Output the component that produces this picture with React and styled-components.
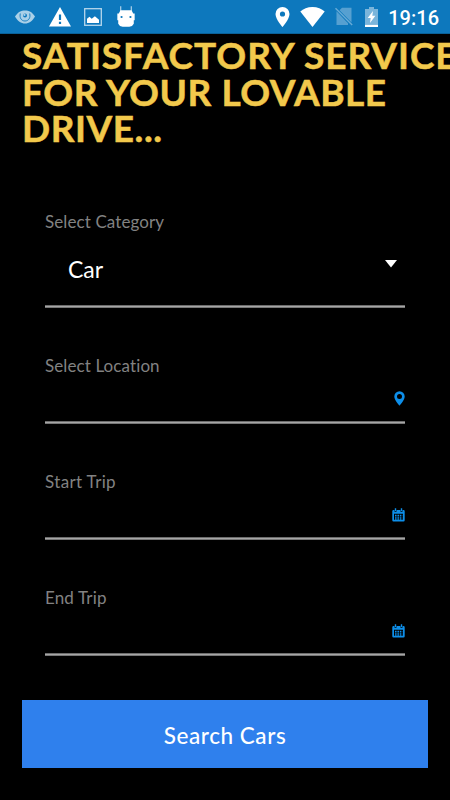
import React from "react";
import styled, { createGlobalStyle } from "styled-components";

const GlobalStyle = createGlobalStyle`
    * {
        box-sizing: border-box;
    }
    body {
        margin: 0;
        background: #000;
        overflow: hidden;
    }
`;

const fields = [
    { label: "Select Location", icon: "pin", spacing: "0.1px" },
    { label: "Start Trip", icon: "calendar", spacing: "0.35px" },
    { label: "End Trip", icon: "calendar", spacing: "0.15px" },
];

const PinIcon = (props) => (
    <svg viewBox="0 0 14 20" {...props}>
        <path
            fill="currentColor"
            fillRule="evenodd"
            d="M7 0a7 7 0 0 0-7 7c0 5.200 7 13 7 13s7-7.800 7-13a7 7 0 0 0-7-7zm0 4.400a2.600 2.600 0 1 1 0 5.200 2.600 2.600 0 0 1 0-5.200z"
        />
    </svg>
);

const FieldPinIcon = () => (
    <svg width="11" height="15" viewBox="0 0 11 15">
        <path
            fill="#0d8ee9"
            fillRule="evenodd"
            d="M5.500.2A5.200 5.200 0 0 0 .3 5.400C.3 9 5.500 14.600 5.500 14.600S10.700 9 10.700 5.400A5.200 5.200 0 0 0 5.500.2zm0 2.900a2.500 2.500 0 1 1 0 5 2.500 2.500 0 0 1 0-5z"
        />
    </svg>
);

const EyeIcon = () => (
    <svg width="20" height="14" viewBox="0 0 20 14" opacity=".65">
        <path fill="#fff" d="M0 6.500C3 2 6 .5 10 .5s7 1.500 10 6C17.500 11 14 13.500 10 13.500S2.500 11 0 6.500z" />
        <path fill="none" stroke="#0d78bd" strokeWidth=".9" d="M5.300 3.500c-1 4.200 1 7.500 4.700 7.500s5.700-3.300 4.700-7.500" />
        <circle cx="10" cy="5.600" r="2" fill="#0d78bd" />
        <circle cx="9.500" cy="4.900" r="1.100" fill="#fff" />
    </svg>
);

const WarningIcon = () => (
    <svg width="22" height="20" viewBox="0 0 22 20">
        <path fill="#fff" fillRule="evenodd" d="M11 0L0 19.500h22zM9.900 7.500h2.200v5.600H9.900zm0 7.300h2.200v2.300H9.900z" />
    </svg>
);

const ImageIcon = () => (
    <svg width="18" height="18" viewBox="0 0 18 18">
        <rect x=".7" y=".7" width="16.600" height="16.600" fill="none" stroke="#fff" strokeOpacity=".7" strokeWidth="1.300" />
        <path fill="#fff" d="M3 15v-4.300l2.500-1.900 2.200 2 3.200-2.500L15 11.700V15z" />
    </svg>
);

const AndroidIcon = () => (
    <svg width="20" height="21" viewBox="0 0 18 21" preserveAspectRatio="none">
        <path fill="none" stroke="#fff" strokeOpacity=".6" strokeWidth="1.200" d="M4.200 .3v5M13.800 .3v5" />
        <path
            fill="#fff"
            fillRule="evenodd"
            d="M4 4.200h10l1.500 3.300h1.300v6.700h-.8v3.500l-1.600 2.300-2.400.8H6l-2.400-.8L2 17.700v-3.500h-.8V7.500h1.300zM5 10a1 1 0 1 0 0 2 1 1 0 0 0 0-2zm8 0a1 1 0 1 0 0 2 1 1 0 0 0 0-2z"
        />
    </svg>
);

const WifiIcon = () => (
    <svg width="25" height="20" viewBox="0 0 25 20">
        <path fill="#fff" d="M12.500 20L.3 4.600C3.300 1.800 7.500 0 12.500 0s9.200 1.800 12.200 4.600z" />
    </svg>
);

const NoSimIcon = () => (
    <svg width="20" height="19" viewBox="0 0 20 19">
        <path fill="#fff" fillOpacity=".3" d="M7 .8h9.500v14.700L4.500 3.300zM1.500 4.200L13 16.200V18H1.500z" />
        <path fill="none" stroke="#fff" strokeOpacity=".38" strokeWidth="1.400" d="M.5 1.200L17.200 18" />
    </svg>
);

const BatteryIcon = () => (
    <svg width="13" height="20" viewBox="0 0 13 20">
        <path fill="#fff" fillOpacity=".45" d="M4 0h5v2h4v15.800H0V2h4z" />
        <path fill="#fff" d="M0 17.800h13V20H0zM8 4L2.700 11h3L5 16l5.400-7.300H7.300z" />
    </svg>
);

const CalendarIcon = () => (
    <svg width="13" height="14" viewBox="0 0 13 14">
        <path
            fill="#0d8ee9"
            fillRule="evenodd"
            d="M1.500 2h1v1.700h2V2h4v1.700h2V2h1q1.200 0 1.200 1.200v9q0 1.300-1.200 1.300h-10Q.3 13.500.3 12.200v-9Q.3 2 1.500 2zM2 5.700v6.100h9V5.700z"
        />
        <path fill="#0d8ee9" d="M2.800.3h1.400v2.800H2.800zM8.800.3h1.400v2.800H8.800z" />
        <path stroke="#0d8ee9" strokeWidth="1.300" strokeDasharray="1.600 .8" d="M3 7.300h7.500M3 9.200h7.500M3 11h7.500" />
    </svg>
);

const App = () => {
    return (
        <Screen>
            <GlobalStyle />
            <StatusBar>
                <StatusIcons $gap={13.5}>
                    <EyeIcon />
                    <WarningIcon />
                    <ImageIcon />
                    <AndroidIcon />
                </StatusIcons>
                <StatusIcons $gap={10}>
                    <PinIcon width="15" height="20" />
                    <WifiIcon />
                    <NoSimIcon />
                    <BatteryIcon />
                    <Clock>19:16</Clock>
                </StatusIcons>
            </StatusBar>
            <Title>
                <TitleLine $spacing="0.95px">SATISFACTORY SERVICE</TitleLine>
                <TitleLine $spacing="0.55px">FOR YOUR LOVABLE</TitleLine>
                <TitleLine $spacing="0.55px">DRIVE...</TitleLine>
            </Title>
            <Form>
                <Field $height={98}>
                    <Label $spacing="0.1px">Select Category</Label>
                    <Select>
                        <Value>Car</Value>
                        <Caret viewBox="0 0 12 8">
                            <path fill="#fff" d="M0 0h12L6 7.500z" />
                        </Caret>
                    </Select>
                </Field>
                {fields.map((field) => (
                    <Field key={field.label} $height={70}>
                        <Label $spacing={field.spacing}>{field.label}</Label>
                        <InputRow>{field.icon === "pin" ? <FieldPinIcon /> : <CalendarIcon />}</InputRow>
                    </Field>
                ))}
            </Form>
            <SearchButton>Search Cars</SearchButton>
        </Screen>
    );
};

const Screen = styled.div`
    width: 450px;
    height: 800px;
    display: flex;
    flex-direction: column;
    overflow: hidden;
    background: #000;
    color: #fff;
    font-family: Lato, "Open Sans", sans-serif;
    font-variant-ligatures: none;
`;

const StatusBar = styled.header`
    height: 34px;
    flex: none;
    display: flex;
    align-items: center;
    justify-content: space-between;
    padding: 0 11px 0 15px;
    background: #0d78bd;
    border-bottom: 1px solid #0a6198;
`;

const StatusIcons = styled.div`
    display: flex;
    align-items: center;
    gap: ${(props) => props.$gap}px;
`;

const Clock = styled.span`
    margin-top: 2px;
    font-family: Roboto, sans-serif;
    font-size: 20px;
    font-weight: 500;
    line-height: 24px;
`;

const Title = styled.h1`
    margin: 0;
    padding: 3px 0 1px 22px;
    color: #f2c94c;
    font-size: 37px;
    font-weight: 700;
    line-height: 36.5px;
    -webkit-text-stroke: 0.5px #f2c94c;
`;

const TitleLine = styled.span`
    display: block;
    white-space: nowrap;
    letter-spacing: ${(props) => props.$spacing};
`;

const Form = styled.div`
    display: flex;
    flex-direction: column;
    gap: 46px;
    padding: 62px 45px 0;
`;

const Field = styled.div`
    height: ${(props) => props.$height}px;
    display: flex;
    flex-direction: column;
    justify-content: space-between;
    padding: 1px 0 3px;
    background: linear-gradient(#6c6c6c 0 1px, #a6a6a6 1px 2px, #777 2px 3px) bottom / 100% 3px no-repeat;
`;

const Label = styled.label`
    color: #828282;
    font-size: 17px;
    line-height: 22px;
    letter-spacing: ${(props) => props.$spacing};
`;

const Select = styled.div`
    display: flex;
    justify-content: space-between;
    align-items: flex-start;
    height: 50px;
    padding: 0 8px 0 23px;
`;

const Value = styled.span`
    font-size: 23px;
    line-height: 28px;
`;

const Caret = styled.svg`
    width: 12px;
    height: 8px;
    margin-top: 5px;
`;

const InputRow = styled.div`
    display: flex;
    justify-content: flex-end;
    padding-bottom: 15px;
`;

const SearchButton = styled.button`
    width: 406px;
    height: 68.500px;
    flex: none;
    margin: 44px 22px 0;
    padding: 3px 0 0;
    border: 0;
    background: #2f80ed;
    color: #fff;
    font-family: inherit;
    font-size: 22.500px;
    font-weight: 500;
    letter-spacing: 0.55px;
`;

export default App;
